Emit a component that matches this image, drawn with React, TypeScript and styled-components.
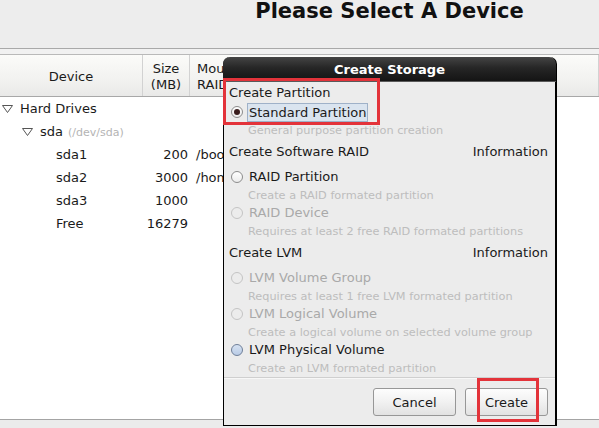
import React from 'react';
import styled, { createGlobalStyle } from 'styled-components';

const GlobalStyle = createGlobalStyle`
  html, body {
    margin: 0;
    padding: 0;
    height: 100%;
    overflow: hidden;
  }
  body {
    background: #ededed;
    font-family: 'DejaVu Sans', 'Liberation Sans', sans-serif;
    font-size: 13px;
    color: #1a1a1a;
  }
  #root {
    height: 100%;
  }
`;

const Page = styled.div`
  position: relative;
  display: flex;
  flex-direction: column;
  height: 100vh;
  background: #ededed;
`;

const TopBar = styled.div`
  height: 48px;
  border-bottom: 1px solid #a9a9a9;
  display: flex;
  justify-content: center;
  padding-left: 180px;
`;

const Title = styled.h1`
  margin: 0;
  font-size: 21px;
  font-weight: bold;
  line-height: 22px;
  color: #111;
`;

const Strip = styled.div`
  height: 5px;
  background: #f1f1f1;
  border-bottom: 1px solid #b9b9b9;
`;

const TableHeader = styled.div`
  height: 41px;
  display: flex;
  background: linear-gradient(#fbfbf9, #f2f2f0 60%, #e9e9e8);
  border-bottom: 1px solid #a8a8a8;
`;

const HeaderCell = styled.div<{ $width?: number; $align?: string }>`
  width: ${p => (p.$width ? `${p.$width}px` : 'auto')};
  flex: ${p => (p.$width ? 'none' : '1')};
  display: flex;
  align-items: center;
  justify-content: ${p => p.$align || 'center'};
  text-align: ${p => (p.$align === 'flex-start' ? 'left' : 'center')};
  padding-left: ${p => (p.$align === 'flex-start' ? '7px' : '0')};
  padding-top: 2px;
  border-right: 1px solid #d2d2d2;
  line-height: 16px;
  box-sizing: border-box;
`;

const TreeBody = styled.div`
  flex: 1;
  background: #fff;
  border-bottom: 1px solid #a4a4a4;
`;

const Row = styled.div`
  height: 23px;
  display: flex;
  align-items: center;
`;

const NameCell = styled.div<{ $indent: number }>`
  width: 143px;
  display: flex;
  align-items: center;
  padding-left: ${p => p.$indent}px;
  box-sizing: border-box;
  white-space: nowrap;
`;

const SizeCell = styled.div`
  width: 47px;
  text-align: right;
  padding-right: 2px;
  box-sizing: border-box;
`;

const MountCell = styled.div`
  padding-left: 6px;
`;

const DevPath = styled.span`
  font-size: 11px;
  color: #b4b4b4;
  margin-left: 5px;
  margin-top: 2px;
`;

const Expander = styled.svg`
  width: 11px;
  height: 8px;
  margin-right: 7px;
  flex: none;
`;

const BottomBar = styled.div`
  height: 8px;
  background: #ebebeb;
`;

const Dialog = styled.div`
  position: absolute;
  left: 223px;
  top: 57px;
  width: 334px;
  height: 369px;
  box-sizing: border-box;
  border: 1px solid #000;
  border-right-width: 2px;
  border-top: none;
  border-radius: 7px 7px 0 0;
  background: #ececec;
  display: flex;
  flex-direction: column;
`;

const DialogTitle = styled.div`
  height: 25px;
  margin: 0 -1px 0 -1px;
  border-radius: 7px 7px 0 0;
  background: linear-gradient(#444, #262626 45%, #141414);
  border-bottom: 1px solid #5a5a5a;
  color: #fff;
  font-weight: bold;
  font-size: 13px;
  display: flex;
  align-items: center;
  justify-content: center;
  box-sizing: border-box;
`;

const DialogBody = styled.div`
  flex: 1;
  padding: 2px 7px 0 5px;
  display: flex;
  flex-direction: column;
`;

const SectionHeader = styled.div<{ $gap: number }>`
  display: flex;
  justify-content: space-between;
  line-height: 18px;
  margin-top: ${p => p.$gap}px;
`;

const Option = styled.div<{ $gap: number }>`
  display: flex;
  align-items: center;
  height: 18px;
  margin-top: ${p => p.$gap}px;
  padding-left: 2px;
`;

type RadioState = 'checked' | 'normal' | 'disabled' | 'hover';

const Radio = styled.span<{ $state: RadioState }>`
  width: 12px;
  height: 12px;
  border-radius: 50%;
  box-sizing: border-box;
  flex: none;
  border: 1px solid
    ${p => (p.$state === 'disabled' ? '#c4c4c4' : p.$state === 'hover' ? '#6f7f99' : '#8c8c8c')};
  background: ${p =>
    p.$state === 'hover'
      ? 'linear-gradient(#d6e2f2, #b9cbe5)'
      : p.$state === 'disabled'
      ? '#ececec'
      : 'linear-gradient(#ffffff, #ececec)'};
  display: flex;
  align-items: center;
  justify-content: center;
  margin-right: 5px;

  &::after {
    content: '';
    display: ${p => (p.$state === 'checked' ? 'block' : 'none')};
    width: 6px;
    height: 6px;
    border-radius: 50%;
    background: #3a1e1e;
  }
`;

const OptionLabel = styled.span<{ $disabled?: boolean; $focused?: boolean }>`
  color: ${p => (p.$disabled ? '#a9a9a9' : '#1a1a1a')};
  line-height: ${p => (p.$focused ? '17px' : '18px')};
  padding: 0 1px;
  margin-left: ${p => (p.$focused ? '-1px' : '0')};
  border: ${p => (p.$focused ? '1px solid #9fb1c8' : 'none')};
  background: ${p => (p.$focused ? '#dae4ef' : 'transparent')};
`;

const Description = styled.div`
  font-size: 11.3px;
  line-height: 16px;
  color: #bdbdbd;
  margin-top: 2px;
  padding-left: 19px;
  white-space: nowrap;
`;

const Separator = styled.div`
  height: 1px;
  background: #cfcfcf;
  margin: 0 -7px 0 -5px;
  border-bottom: 1px solid #f7f7f7;
`;

const ButtonRow = styled.div`
  display: flex;
  justify-content: flex-end;
  gap: 9px;
  padding-top: 9px;
`;

const Button = styled.button`
  width: 83px;
  height: 28px;
  font-family: inherit;
  font-size: 13px;
  color: #1a1a1a;
  background: linear-gradient(#fdfdfd, #f1f1f1 50%, #e2e2e2);
  border: 1px solid #979797;
  border-radius: 3px;
  padding: 0;
`;

const Marker = styled.div<{ $left: number; $top: number; $w: number; $h: number }>`
  position: absolute;
  left: ${p => p.$left}px;
  top: ${p => p.$top}px;
  width: ${p => p.$w}px;
  height: ${p => p.$h}px;
  border: 3px solid #e3333a;
  box-sizing: border-box;
  pointer-events: none;
`;

const Arrow = () => (
  <Expander viewBox="0 0 11 8">
    <polygon points="0.5,0.5 10.5,0.5 5.5,7.5" fill="none" stroke="#555" strokeWidth="1" />
  </Expander>
);

const rows = [
  { name: 'sda1', size: '200', mount: '/boot' },
  { name: 'sda2', size: '3000', mount: '/home' },
  { name: 'sda3', size: '1000', mount: '' },
  { name: 'Free', size: '16279', mount: '' },
];

const App: React.FC = () => {
  return (
    <Page>
      <GlobalStyle />
      <TopBar>
        <Title>Please Select A Device</Title>
      </TopBar>
      <Strip />
      <TableHeader>
        <HeaderCell $width={143}>Device</HeaderCell>
        <HeaderCell $width={47}>
          Size
          <br />
          (MB)
        </HeaderCell>
        <HeaderCell $align="flex-start">
          Mount Point/
          <br />
          RAID/Volume
        </HeaderCell>
      </TableHeader>
      <TreeBody>
        <Row>
          <NameCell $indent={2}>
            <Arrow />
            Hard Drives
          </NameCell>
        </Row>
        <Row>
          <NameCell $indent={22}>
            <Arrow />
            sda
            <DevPath>(/dev/sda)</DevPath>
          </NameCell>
        </Row>
        {rows.map(r => (
          <Row key={r.name}>
            <NameCell $indent={56}>{r.name}</NameCell>
            <SizeCell>{r.size}</SizeCell>
            <MountCell>{r.mount}</MountCell>
          </Row>
        ))}
      </TreeBody>
      <BottomBar />

      <Dialog>
        <DialogTitle>Create Storage</DialogTitle>
        <DialogBody>
          <SectionHeader $gap={0}>
            <span>Create Partition</span>
          </SectionHeader>
          <Option $gap={1}>
            <Radio $state="checked" />
            <OptionLabel $focused>Standard Partition</OptionLabel>
          </Option>
          <Description>General purpose partition creation</Description>

          <SectionHeader $gap={4}>
            <span>Create Software RAID</span>
            <span>Information</span>
          </SectionHeader>
          <Option $gap={7}>
            <Radio $state="normal" />
            <OptionLabel>RAID Partition</OptionLabel>
          </Option>
          <Description>Create a RAID formated partition</Description>
          <Option $gap={0}>
            <Radio $state="disabled" />
            <OptionLabel $disabled>RAID Device</OptionLabel>
          </Option>
          <Description>Requires at least 2 free RAID formated partitions</Description>

          <SectionHeader $gap={4}>
            <span>Create LVM</span>
            <span>Information</span>
          </SectionHeader>
          <Option $gap={7}>
            <Radio $state="disabled" />
            <OptionLabel $disabled>LVM Volume Group</OptionLabel>
          </Option>
          <Description>Requires at least 1 free LVM formated partition</Description>
          <Option $gap={0}>
            <Radio $state="disabled" />
            <OptionLabel $disabled>LVM Logical Volume</OptionLabel>
          </Option>
          <Description>Create a logical volume on selected volume group</Description>
          <Option $gap={0}>
            <Radio $state="hover" />
            <OptionLabel>LVM Physical Volume</OptionLabel>
          </Option>
          <Description>Create an LVM formated partition</Description>

          <Separator />
          <ButtonRow>
            <Button>Cancel</Button>
            <Button>Create</Button>
          </ButtonRow>
        </DialogBody>
      </Dialog>

      <Marker $left={223} $top={78} $w={157} $h={47} />
      <Marker $left={477} $top={378} $w={62} $h={44} />
    </Page>
  );
};

export default App;
